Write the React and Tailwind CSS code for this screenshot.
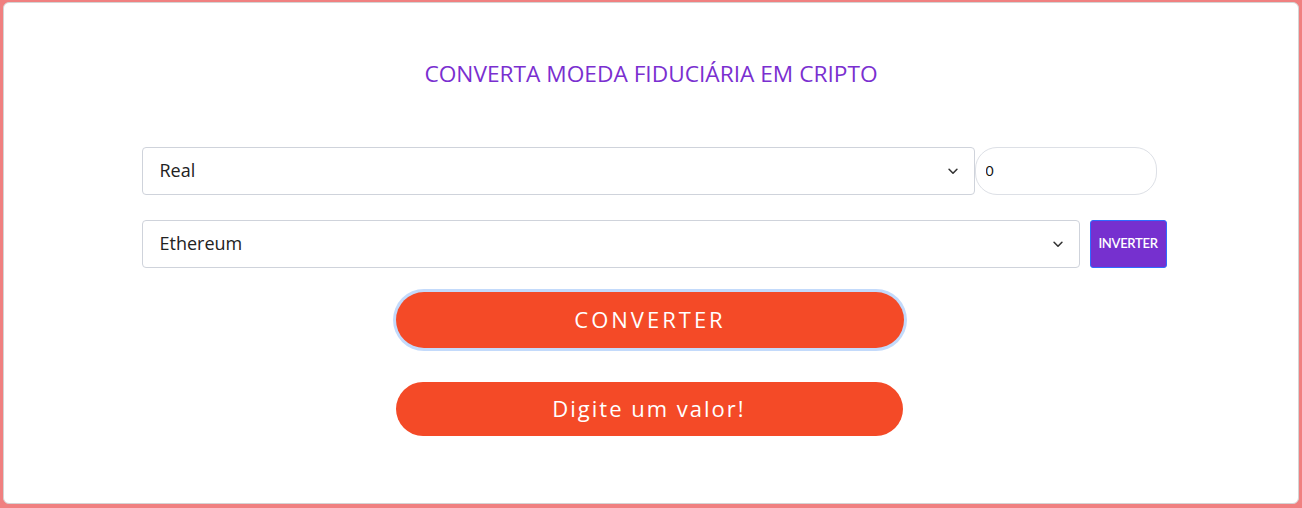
import React, { useState } from "react";

const Chevron = () => (
  <svg
    className="pointer-events-none absolute right-[15px] top-1/2 -translate-y-1/2 w-[14px] h-[14px] text-[#333]"
    viewBox="0 0 16 16"
    fill="none"
    stroke="currentColor"
    strokeWidth="1.8"
    strokeLinecap="round"
    strokeLinejoin="round"
  >
    <path d="M3.5 6l4.5 4.5L12.5 6" />
  </svg>
);

const SelectBox = ({ value, options, onChange, className }) => (
  <div className={`relative ${className}`}>
    <select
      value={value}
      onChange={(e) => onChange(e.target.value)}
      className="appearance-none w-full h-full bg-white border border-[#cfd3db] rounded-[4px] pl-[17px] pr-10 text-[18px] text-[#222] outline-none"
    >
      {options.map((o) => (
        <option key={o}>{o}</option>
      ))}
    </select>
    <Chevron />
  </div>
);

export default function App() {
  const [from, setFrom] = useState("Real");
  const [to, setTo] = useState("Ethereum");
  const [amount, setAmount] = useState("0");

  return (
    <div
      className="w-[1302px] h-[508px] bg-[#f08080] pt-[2px] pl-[3px] pr-[3px] pb-[4px]"
      style={{ fontFamily: '"Open Sans", "Noto Sans", sans-serif' }}
    >
      <div className="h-full bg-white border border-[#d4d4d4] rounded-[6px] flex flex-col items-center">
        {/* Title */}
        <h1 className="mt-[60px] text-[22.7px] font-medium text-[#7a2fd0] leading-none">
          CONVERTA MOEDA FIDUCIÁRIA EM CRIPTO
        </h1>

        {/* Form */}
        <div className="mt-[61px] w-[1025px] ml-[6px] flex flex-col">
          <div className="flex h-[48px]">
            <SelectBox
              value={from}
              onChange={setFrom}
              options={["Real", "Dólar", "Euro"]}
              className="w-[833px]"
            />
            <input
              value={amount}
              onChange={(e) => setAmount(e.target.value)}
              className="w-[182px] h-full border border-[#dde0e6] rounded-[22px] pl-[10px] text-[14px] text-[#111] outline-none"
              style={{ fontFamily: "Lato, sans-serif" }}
            />
          </div>
          <div className="flex h-[48px] mt-[25px] gap-[10px]">
            <SelectBox
              value={to}
              onChange={setTo}
              options={["Ethereum", "Bitcoin", "Litecoin"]}
              className="w-[938px]"
            />
            <button
              className="w-[77px] h-full bg-[#7630cf] border border-[#2f6bff] rounded-[3px] text-white text-[13px] font-semibold tracking-[-0.3px]"
              style={{ fontFamily: "Lato, sans-serif" }}
            >
              INVERTER
            </button>
          </div>
        </div>

        {/* Actions */}
        <button className="mt-[24px] w-[508px] h-[56px] bg-[#f44a27] text-white text-[22px] tracking-[3px] rounded-full ring-[3px] ring-[#c3dafb] border-0 ml-[-2px]">
          CONVERTER
        </button>
        <button className="mt-[34px] w-[507px] h-[54px] bg-[#f44a27] text-white text-[22px] tracking-[2px] rounded-full ml-[-4px]">
          Digite um valor!
        </button>
      </div>
    </div>
  );
}
